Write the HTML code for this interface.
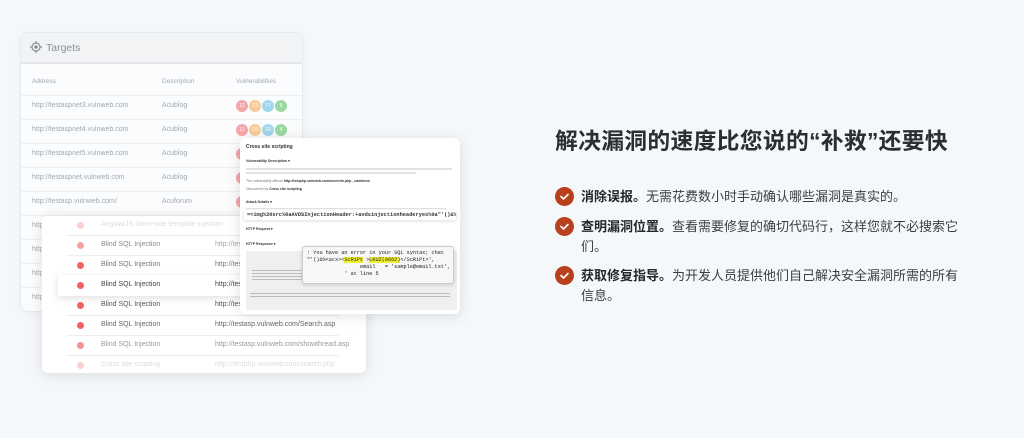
<!DOCTYPE html>
<html><head><meta charset="utf-8"><style>
*{margin:0;padding:0;box-sizing:border-box}
body{width:1024px;height:438px;overflow:hidden;background:#f5f8fb;font-family:"Liberation Sans","Noto Sans CJK SC",sans-serif;position:relative}
.a{position:absolute}
.card{position:absolute;left:20px;top:32px;width:283px;height:280px;background:#fbfcfd;border:1px solid #e6e9ec;border-radius:8px;overflow:hidden;box-shadow:0 2px 8px rgba(0,0,0,.04)}
.hd{height:31px;background:#f2f3f5;border-bottom:2px solid #e3e5e8;font-size:10.5px;color:#8a9099;padding:9px 0 0 25px}
.t{font-size:7px;color:#a3a8ae;white-space:nowrap}
.ln{position:absolute;height:1px;background:#eceef0}
.b{position:absolute;width:12px;height:12px;border-radius:50%;font-size:5px;color:#fff;text-align:center;line-height:12px}
.iss{position:absolute;left:42px;top:216px;width:324px;height:157px;background:#fff;border-radius:6px;box-shadow:0 2px 14px rgba(0,0,0,.12);overflow:hidden}
.ic{position:absolute;left:35px;width:7px;height:7px;border-radius:50%;background:#f06262}
.det{position:absolute;left:240px;top:138px;width:220px;height:176px;background:#fff;border-radius:6px;box-shadow:0 2px 14px rgba(0,0,0,.12);overflow:hidden}
.s{position:absolute;left:6px;font-size:3.5px;font-weight:bold;color:#333;white-space:nowrap}
.g{position:absolute;left:6px;height:2px;background:#d8d8d8}
h1{position:absolute;left:555px;top:123px;font-size:22.8px;font-weight:bold;color:#2b2f33;white-space:nowrap;letter-spacing:.3px}
.li{position:absolute;left:581px;font-size:13px;color:#3a3f45;line-height:19.5px;white-space:nowrap}
.li b{color:#23272b}
.ck{position:absolute;left:555px;width:19px;height:19px;border-radius:50%;background:#b8401f}
.ck svg{position:absolute;left:4px;top:4px}
</style></head><body>

<div class="card">
 <div class="hd"><svg class="a" style="left:9px;top:8px" width="12" height="12" viewBox="0 0 12 12"><circle cx="6" cy="6" r="4" fill="none" stroke="#8a9099" stroke-width="1.2"/><circle cx="6" cy="6" r="1.8" fill="#8a9099"/><path d="M6 0v2M6 10v2M0 6h2M10 6h2" stroke="#8a9099" stroke-width="1.2"/></svg>Targets</div>
 <div class="t a" style="left:11px;top:45px;font-size:6.5px">Address</div><div class="t a" style="left:141px;top:45px;font-size:6.5px">Description</div><div class="t a" style="left:215px;top:45px;font-size:6.5px">Vulnerabilities</div>
 <div class="ln" style="left:0;right:0;top:62px"></div>
 <div class="t a" style="left:11px;top:69px">http://testaspnet3.vulnweb.com</div><div class="t a" style="left:141px;top:69px">Acublog</div>
 <div class="b" style="left:215px;top:67px;background:#f3a5a7">12</div><div class="b" style="left:228px;top:67px;background:#f6cc98">13</div><div class="b" style="left:241px;top:67px;background:#9fd7ee">17</div><div class="b" style="left:254px;top:67px;background:#9bd9a2">9</div>
 <div class="ln" style="left:0;right:0;top:86px"></div>
 <div class="t a" style="left:11px;top:93px">http://testaspnet4.vulnweb.com</div><div class="t a" style="left:141px;top:93px">Acublog</div>
 <div class="b" style="left:215px;top:91px;background:#f3a5a7">11</div><div class="b" style="left:228px;top:91px;background:#f6cc98">18</div><div class="b" style="left:241px;top:91px;background:#9fd7ee">19</div><div class="b" style="left:254px;top:91px;background:#9bd9a2">4</div>
 <div class="ln" style="left:0;right:0;top:110px"></div>
 <div class="t a" style="left:11px;top:117px">http://testaspnet5.vulnweb.com</div><div class="t a" style="left:141px;top:117px">Acublog</div><div class="b" style="left:215px;top:115px;background:#f3a5a7"></div>
 <div class="ln" style="left:0;right:0;top:134px"></div>
 <div class="t a" style="left:11px;top:141px">http://testaspnet.vulnweb.com</div><div class="t a" style="left:141px;top:141px">Acublog</div><div class="b" style="left:215px;top:139px;background:#f3a5a7"></div>
 <div class="ln" style="left:0;right:0;top:158px"></div>
 <div class="t a" style="left:11px;top:165px">http://testasp.vulnweb.com/</div><div class="t a" style="left:141px;top:165px">Acuforum</div><div class="b" style="left:215px;top:163px;background:#f3a5a7"></div>
 <div class="ln" style="left:0;right:0;top:182px"></div>
 <div class="t a" style="left:11px;top:189px">http</div><div class="ln" style="left:0;right:0;top:206px"></div>
 <div class="t a" style="left:11px;top:213px">http</div><div class="ln" style="left:0;right:0;top:230px"></div>
 <div class="t a" style="left:11px;top:237px">http</div><div class="ln" style="left:0;right:0;top:254px"></div>
 <div class="t a" style="left:11px;top:261px">http</div>
</div>

<div class="iss">
 <div class="ic" style="top:6px;opacity:.3"></div><div class="t a" style="left:59px;top:5px;opacity:.4">AngularJS client-side template injection</div>
 <div class="ln" style="left:25px;width:272px;top:19px"></div>
 <div class="ic" style="top:26px;opacity:.6"></div><div class="t a" style="left:59px;top:25px;color:#888">Blind SQL Injection</div><div class="t a" style="left:173px;top:25px">http://testasp.vulnweb.com/</div>
 <div class="ln" style="left:25px;width:272px;top:39px"></div>
 <div class="ic" style="top:46px"></div><div class="t a" style="left:59px;top:45px;color:#777">Blind SQL Injection</div><div class="t a" style="left:173px;top:45px;color:#777">http://testasp.vulnweb.com/</div>
 <div class="a" style="left:16px;top:59px;width:200px;height:21px;background:#fff;box-shadow:0 2px 8px rgba(0,0,0,.13)"></div>
 <div class="ic" style="top:66px"></div><div class="t a" style="left:59px;top:65px;color:#444">Blind SQL Injection</div><div class="t a" style="left:173px;top:65px;color:#444">http://testasp.vulnweb.com/</div>
 <div class="ic" style="top:86px"></div><div class="t a" style="left:59px;top:85px;color:#555">Blind SQL Injection</div><div class="t a" style="left:173px;top:85px;color:#555">http://testasp.vulnweb.com/</div>
 <div class="ln" style="left:25px;width:272px;top:99px"></div>
 <div class="ic" style="top:106px"></div><div class="t a" style="left:59px;top:105px;color:#666">Blind SQL Injection</div><div class="t a" style="left:173px;top:105px;color:#666">http://testasp.vulnweb.com/Search.asp</div>
 <div class="ln" style="left:25px;width:272px;top:119px"></div>
 <div class="ic" style="top:126px;opacity:.7"></div><div class="t a" style="left:59px;top:125px;color:#999">Blind SQL Injection</div><div class="t a" style="left:173px;top:125px;color:#999">http://testasp.vulnweb.com/showthread.asp</div>
 <div class="ln" style="left:25px;width:272px;top:139px"></div>
 <div class="ic" style="top:146px;opacity:.3"></div><div class="t a" style="left:59px;top:145px;opacity:.4">Cross site scripting</div><div class="t a" style="left:173px;top:145px;opacity:.4">http://testphp.vulnweb.com/search.php</div>
</div>

<div class="det">
 <div class="s" style="top:6px;font-size:5px">Cross site scripting</div>
 <div class="s" style="top:21px">Vulnerability Description ▾</div>
 <div class="g" style="top:30px;width:206px;background:#e2e2e2"></div><div class="g" style="top:34px;width:170px;background:#e2e2e2"></div>
 <div class="s" style="top:41px;font-weight:normal;color:#777">The vulnerability affects <b style="color:#333">http://testphp.vulnweb.com/userinfo.php , uaddress</b></div>
 <div class="s" style="top:49px;font-weight:normal;color:#777">Discovered by <b style="color:#333">Cross site scripting</b></div>
 <div class="s" style="top:62px">Attack Details ▾</div>
 <div class="g" style="top:70px;width:200px;height:1px;background:#e2e2e2"></div>
 <div class="a" style="left:4px;top:72px;width:212px;height:10px;background:#fff;box-shadow:0 1px 3px rgba(0,0,0,.15);font:bold 5.3px 'Liberation Mono',monospace;color:#333;line-height:10px;padding-left:3px;white-space:nowrap;overflow:hidden">=&lt;img%20src%0aAVDSInjectionHeader:+avdsinjectionheaderyes%0a"'()&amp;%&lt;acx&gt;=<span style="background:#888;color:#fff">ScRiPt</span></div>
 <div class="s" style="top:89px">HTTP Request ▾</div>
 <div class="s" style="top:104px">HTTP Response ▾</div>
 <div class="a" style="left:6px;top:113px;width:211px;height:59px;background:#efefef"></div>
 <div class="g" style="top:132px;width:50px;height:12px;left:12px;background:repeating-linear-gradient(#bbb 0 1px,transparent 1px 3px)"></div>
 <div class="g" style="top:155px;width:200px;height:4px;left:10px;background:repeating-linear-gradient(#bbb 0 1px,transparent 1px 3px)"></div>
 <div class="a" style="left:62px;top:108px;width:152px;height:38px;background:#f7f7f7;border:1px solid #ccc;border-radius:3px;box-shadow:0 1px 4px rgba(0,0,0,.15);font:5.2px/7px 'Liberation Mono',monospace;color:#222;padding:3px 0 0 4px;white-space:pre;overflow:hidden">: You have an error in your SQL syntax; chec
"'()&amp;%&lt;acx&gt;&lt;<span style="background:#f0f030">ScRiPt</span> &gt;<span style="background:#f0f030">LKUZ(9662)</span>&lt;/ScRiPt&gt;',
                 email   = 'sample@email.tst',
            ' at line 5</div>
</div>

<h1>解决漏洞的速度比您说的“补救”还要快</h1>
<div class="ck" style="top:187px"><svg width="11" height="11" viewBox="0 0 11 11"><path d="M2 5.5l2.5 2.5L9 3.5" fill="none" stroke="#fff" stroke-width="1.6" stroke-linecap="round" stroke-linejoin="round"/></svg></div>
<div class="li" style="top:187px"><b>消除误报。</b>无需花费数小时手动确认哪些漏洞是真实的。</div>
<div class="ck" style="top:217px"><svg width="11" height="11" viewBox="0 0 11 11"><path d="M2 5.5l2.5 2.5L9 3.5" fill="none" stroke="#fff" stroke-width="1.6" stroke-linecap="round" stroke-linejoin="round"/></svg></div>
<div class="li" style="top:217px"><b>查明漏洞位置。</b>查看需要修复的确切代码行，这样您就不必搜索它<br>们。</div>
<div class="ck" style="top:266px"><svg width="11" height="11" viewBox="0 0 11 11"><path d="M2 5.5l2.5 2.5L9 3.5" fill="none" stroke="#fff" stroke-width="1.6" stroke-linecap="round" stroke-linejoin="round"/></svg></div>
<div class="li" style="top:266px"><b>获取修复指导。</b>为开发人员提供他们自己解决安全漏洞所需的所有<br>信息。</div>
</body></html>
